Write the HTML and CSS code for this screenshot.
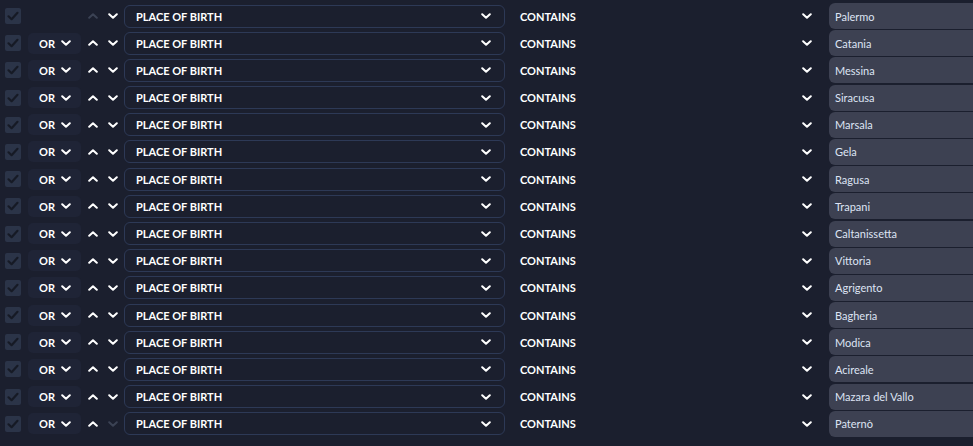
FILE: index.html
```html
<!DOCTYPE html>
<html>
<head>
<meta charset="utf-8">
<link rel="stylesheet" href="styles.css">
</head>
<body>
<div class="list" id="list"></div>
<script>
const cities = ["Palermo","Catania","Messina","Siracusa","Marsala","Gela","Ragusa","Trapani","Caltanissetta","Vittoria","Agrigento","Bagheria","Modica","Acireale","Mazara del Vallo","Paternò"];
const chev = '<svg class="chev" viewBox="0 0 10 6" width="10" height="6"><path d="M1.2 1.2 L5 4.8 L8.8 1.2" fill="none" stroke="currentColor" stroke-width="2" stroke-linecap="round" stroke-linejoin="round"/></svg>';
const up = '<svg class="chev" viewBox="0 0 10 6" width="10" height="6"><path d="M1.2 4.8 L5 1.2 L8.8 4.8" fill="none" stroke="currentColor" stroke-width="2" stroke-linecap="round" stroke-linejoin="round"/></svg>';
const check = '<svg viewBox="0 0 16 16" width="16" height="16"><path d="M3.5 8.3 L6.6 11.2 L12.5 4.8" fill="none" stroke="currentColor" stroke-width="2.2" stroke-linecap="round" stroke-linejoin="round"/></svg>';
const list = document.getElementById('list');
cities.forEach((c, i) => {
  const row = document.createElement('div');
  row.className = 'row';
  row.innerHTML =
    '<div class="cb">' + check + '</div>' +
    (i === 0 ? '<div class="op empty"></div>' : '<div class="op"><span>OR</span>' + chev + '</div>') +
    '<div class="arrows"><button class="arr' + (i === 0 ? ' dim' : '') + '">' + up + '</button><button class="arr' + (i === cities.length - 1 ? ' dim' : '') + '">' + chev + '</button></div>' +
    '<div class="sel field"><span>PLACE OF BIRTH</span>' + chev + '</div>' +
    '<div class="sel cond"><span>CONTAINS</span>' + chev + '</div>' +
    '<div class="val">' + c + '</div>';
  list.appendChild(row);
});
</script>
</body>
</html>
```
FILE: styles.css
```css
html, body {
  margin: 0;
  padding: 0;
  background: #1b1f2e;
  font-family: Lato, "Noto Sans", sans-serif;
  color: #ffffff;
  overflow: hidden;
}
.list {
  padding-top: 3px;
  display: flex;
  flex-direction: column;
  gap: 1.2px;
}
.row {
  height: 26px;
  display: flex;
  align-items: center;
}
.cb {
  width: 16px;
  height: 16px;
  margin-left: 5px;
  border-radius: 2px;
  background: #2b3448;
  color: #161a25;
  display: flex;
}
.op {
  margin-left: 7px;
  width: 53px;
  height: 21px;
  box-sizing: border-box;
  border-radius: 5px;
  background: #1f2436;
  display: flex;
  align-items: center;
  padding-left: 11px;
  font-size: 11px;
  font-weight: 700;
  gap: 6px;
}
.op.empty { background: transparent; }
.arrows {
  margin-left: 2px;
  display: flex;
  width: 41px;
}
.arr {
  width: 20px;
  height: 20px;
  padding: 0;
  border: 0;
  background: none;
  color: #ffffff;
  display: flex;
  align-items: center;
  justify-content: center;
}
.arr.dim { color: #3b4254; }
.sel {
  box-sizing: border-box;
  display: flex;
  align-items: center;
  justify-content: space-between;
  font-size: 11px;
  font-weight: 700;
}
.field {
  width: 381px;
  height: 23px;
  border: 1.5px solid #2d3956;
  border-radius: 6px;
  padding: 0 13px 0 11px;
}
.cond {
  margin-left: 2px;
  width: 316px;
  height: 26px;
  padding: 0 11px 0 13px;
}
.val {
  margin-left: 6px;
  flex: 1;
  height: 26px;
  border-radius: 6px 0 0 6px;
  background: #3d4152;
  display: flex;
  align-items: center;
  padding-left: 6px;
  font-size: 11px;
  color: #dde4f4;
}
.chev { display: block; }
```
